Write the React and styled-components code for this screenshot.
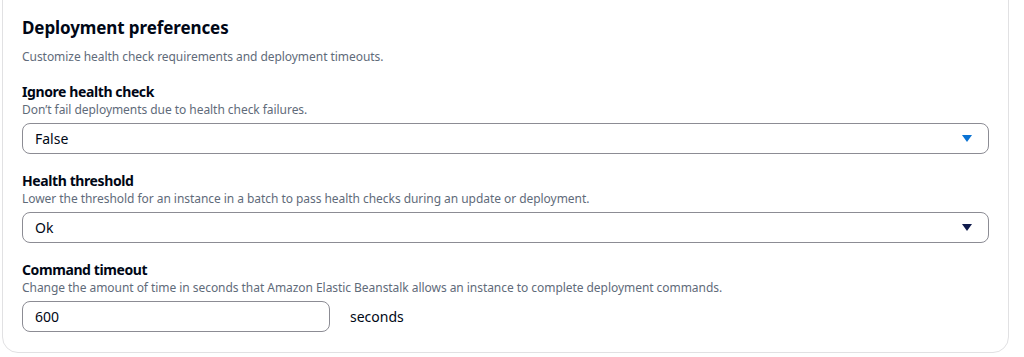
import styled, { createGlobalStyle } from 'styled-components';

const GlobalStyle = createGlobalStyle`
  body {
    margin: 0;
    padding: 0;
    background: #fff;
    font-family: 'Noto Sans', 'Open Sans', Arial, sans-serif;
    color: #000716;
    overflow: hidden;
  }
`;

const fields = [
  {
    label: 'Ignore health check',
    hint: 'Don’t fail deployments due to health check failures.',
    kind: 'select',
    value: 'False',
    focused: true,
  },
  {
    label: 'Health threshold',
    hint: 'Lower the threshold for an instance in a batch to pass health checks during an update or deployment.',
    kind: 'select',
    value: 'Ok',
  },
  {
    label: 'Command timeout',
    hint: 'Change the amount of time in seconds that Amazon Elastic Beanstalk allows an instance to complete deployment commands.',
    kind: 'input',
    value: '600',
    suffix: 'seconds',
  },
];

const Caret = ({ color }) => (
  <svg width="10" height="7" viewBox="0 0 10 7">
    <path d="M0 0 L10 0 L5 7 Z" fill={color} />
  </svg>
);

const App = () => {
  return (
    <>
      <GlobalStyle />
      <Card>
        <Title>Deployment preferences</Title>
        <Intro>Customize health check requirements and deployment timeouts.</Intro>
        <Fields>
          {fields.map((f) => (
            <Field key={f.label}>
              <Label>{f.label}</Label>
              <Hint>{f.hint}</Hint>
              {f.kind === 'select' ? (
                <Select>
                  <span>{f.value}</span>
                  <Caret color={f.focused ? '#0972d3' : '#0f1b4c'} />
                </Select>
              ) : (
                <InputRow>
                  <Input>{f.value}</Input>
                  <Suffix>{f.suffix}</Suffix>
                </InputRow>
              )}
            </Field>
          ))}
        </Fields>
      </Card>
    </>
  );
};

const Card = styled.section`
  margin: -24px 15px 0 2px;
  padding: 40px 19px 20px 19px;
  border: 1px solid #e1e1e3;
  border-radius: 16px;
  background: #fff;
`;

const Title = styled.h2`
  margin: 0;
  font-size: 17px;
  line-height: 22px;
  font-weight: 700;
  letter-spacing: -0.1px;
  color: #000716;
`;

const Intro = styled.p`
  margin: 10px 0 0;
  font-size: 12px;
  line-height: 16px;
  letter-spacing: -0.05px;
  color: #5f6b7a;
`;

const Fields = styled.div`
  display: flex;
  flex-direction: column;
  gap: 18px;
  margin-top: 18px;
`;

const Field = styled.div`
  display: flex;
  flex-direction: column;
`;

const Label = styled.div`
  font-size: 14px;
  line-height: 18px;
  font-weight: 700;
  letter-spacing: -0.4px;
  color: #000716;
`;

const Hint = styled.div`
  margin-top: 1px;
  font-size: 12px;
  line-height: 16px;
  letter-spacing: -0.05px;
  color: #5f6b7a;
`;

const Select = styled.div`
  margin-top: 5px;
  height: 31px;
  box-sizing: border-box;
  display: flex;
  align-items: center;
  justify-content: space-between;
  padding: 0 16px 0 12px;
  border: 1px solid #8c8c94;
  border-radius: 8px;
  font-size: 14px;
  color: #000716;
`;

const InputRow = styled.div`
  margin-top: 5px;
  display: flex;
  align-items: center;
  gap: 20px;
`;

const Input = styled.div`
  width: 308px;
  height: 31px;
  box-sizing: border-box;
  display: flex;
  align-items: center;
  padding: 0 12px;
  border: 1px solid #8c8c94;
  border-radius: 8px;
  font-size: 14px;
  color: #000716;
`;

const Suffix = styled.span`
  font-size: 14px;
  color: #000716;
`;

export default App;
